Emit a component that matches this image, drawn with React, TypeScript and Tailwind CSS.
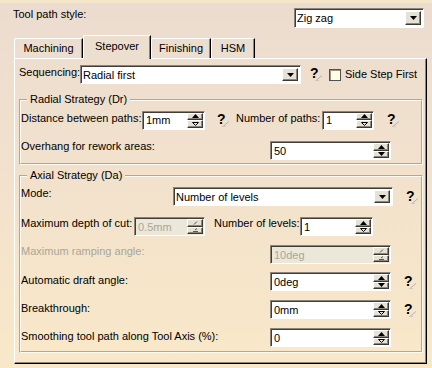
import React from 'react'

// Raised 3D bevel (classic Windows button look)
const raised =
  'border border-t-white border-l-white border-b-[#3a3833] border-r-[#3a3833] shadow-[inset_-1px_-1px_0_#8c877d] bg-[#e6e1d5]'
// Sunken field
const sunken =
  'border border-t-[#8a857c] border-l-[#8a857c] border-b-white border-r-white shadow-[inset_1px_1px_0_#3f3d39]'

function Help() {
  return (
    <span className="relative inline-block w-[14px] h-[16px] font-bold text-[14px] leading-[16px] text-black">
      ?
      <svg className="absolute left-[5px] top-[10px]" width="8" height="6" viewBox="0 0 8 6">
        <path d="M1 5.5 L7 0.5" stroke="#b8b2a6" strokeWidth="1" />
        <path d="M0 5.5 L4 5.5" stroke="#cfc9bd" strokeWidth="1" />
      </svg>
    </span>
  )
}

function Combo({ value, width, height = 19 }: { value: string; width: number; height?: number }) {
  return (
    <div className={`flex items-stretch bg-white ${sunken}`} style={{ width, height }}>
      <div className="flex-1 flex items-center pl-[2px] pt-px text-black">{value}</div>
      <div className={`w-[16px] m-[2px] ml-0 flex items-center justify-center ${raised}`}>
        <svg width="7" height="4" viewBox="0 0 7 4">
          <polygon points="0,0 7,0 3.5,4" fill="#000" />
        </svg>
      </div>
    </div>
  )
}

function SpinBtn({ up, hollow, disabled }: { up: boolean; hollow?: boolean; disabled?: boolean }) {
  return (
    <div className={`flex-1 flex items-center justify-center ${raised}`}>
      {disabled ? (
        <svg width="7" height="4" viewBox="0 0 7 4">
          {up ? (
            <path d="M2 3.5 L5 0.5" stroke="#5a574f" strokeWidth="1" />
          ) : (
            <path d="M1 3.5 L6 3.5 M3 2 L5 0.5" stroke="#5a574f" strokeWidth="1" />
          )}
        </svg>
      ) : (
        <svg width="7" height="4" viewBox="0 0 7 4">
          {up ? (
            <polygon points="0,4 7,4 3.5,0" fill="#000" />
          ) : hollow ? (
            <polygon points="0.5,0.5 6.5,0.5 3.5,3.5" fill="none" stroke="#000" strokeWidth="1" />
          ) : (
            <polygon points="0,0 7,0 3.5,4" fill="#000" />
          )}
        </svg>
      )}
    </div>
  )
}

function Spinner({
  value,
  width,
  disabled,
  hollow,
}: {
  value: string
  width: number
  disabled?: boolean
  hollow?: boolean
}) {
  return (
    <div
      className={`flex items-stretch h-[19px] ${disabled ? 'bg-[#ebe7d9]' : 'bg-white'} ${sunken}`}
      style={{ width }}
    >
      <div className={`flex-1 flex items-center pl-[3px] pt-px ${disabled ? 'text-[#aaa697]' : 'text-black'}`}>
        {value}
      </div>
      <div className="w-[16px] flex flex-col m-px ml-0 mt-[1px]">
        <SpinBtn up disabled={disabled} />
        <SpinBtn up={false} hollow={hollow} disabled={disabled} />
      </div>
    </div>
  )
}

function Tab({ label, selected, width }: { label: string; selected?: boolean; width: number }) {
  return (
    <div
      className={`flex items-center justify-center border-l border-t border-white border-r border-r-black shadow-[inset_-1px_0_0_#8c877d] rounded-tl-[2px] ${
        selected ? 'h-[24px] -mb-px z-10 pb-[2px] bg-[#eddfd0]' : 'h-[20px]'
      }`}
      style={{ width }}
    >
      {label}
    </div>
  )
}

function Group({ title, children }: { title: string; children: React.ReactNode }) {
  return (
    <fieldset className="ml-[4px] w-[404px] border-2 border-[#fffaf0] [border-style:groove]">
      <legend className="ml-[6px] px-[3px] leading-[13px]">{title}</legend>
      {children}
    </fieldset>
  )
}

export default function App() {
  return (
    <div className="relative w-[432px] h-[368px] overflow-hidden bg-linear-to-b from-[#ebdcd0] via-[#f2e2cc] to-[#f9e8c8] font-['Liberation_Sans',Arial,sans-serif] text-[11px] text-black border-t-[3px] border-t-[#f6e6c9]">
      {/* Tool path style row */}
      <div className="flex items-center h-[20px] mt-[5px]">
        <div className="pl-[13px] -mt-[8px]">Tool path style:</div>
        <div className="flex-1" />
        <div className="mr-[8px]">
          <Combo value="Zig zag" width={130} height={20} />
        </div>
      </div>

      {/* Tabs */}
      <div className="flex items-end h-[23px] mt-[7px] ml-[14px]">
        <Tab label="Machining" width={69} />
        <Tab label="Stepover" width={68} selected />
        <Tab label="Finishing" width={60} />
        <Tab label="HSM" width={44} />
      </div>

      {/* Panel */}
      <div className="ml-[14px] w-[413px] h-[306px] border-l border-t border-white border-r border-b border-r-black border-b-black shadow-[inset_-1px_-1px_0_#8c877d]">
        {/* Sequencing */}
        <div className="flex items-center h-[19px] mt-[6px] pl-[4px]">
          <div className="w-[61px] -mt-[5px]">Sequencing:</div>
          <Combo value="Radial first" width={221} />
          <div className="ml-[9px] mt-[-2px]">
            <Help />
          </div>
          <div className="ml-[5px] w-[12px] h-[12px] bg-[#fffde2] border border-[#505050] shadow-[inset_1px_1px_0_#9a958c]" />
          <div className="ml-[4px]">Side Step First</div>
        </div>

        {/* Radial strategy */}
        <div className="mt-[9px]">
          <Group title="Radial Strategy (Dr)">
            <div className="flex items-center h-[20px] mt-[4px]">
              <div className="w-[121px] -mt-[4px]">Distance between paths:</div>
              <Spinner value="1mm" width={63} hollow />
              <div className="ml-[12px]">
                <Help />
              </div>
              <div className="ml-[5px] -mt-[4px] w-[86px]">Number of paths:</div>
              <Spinner value="1" width={52} hollow />
              <div className="ml-[13px]">
                <Help />
              </div>
            </div>
            <div className="flex items-center h-[19px] mt-[11px] mb-[3px]">
              <div className="w-[249px] -mt-[8px]">Overhang for rework areas:</div>
              <Spinner value="50" width={121} />
            </div>
          </Group>
        </div>

        {/* Axial strategy */}
        <div className="mt-[4px]">
          <Group title="Axial Strategy (Da)">
            <div className="flex items-center h-[19px] mt-[5px]">
              <div className="w-[152px] -mt-[6px]">Mode:</div>
              <Combo value="Number of levels" width={220} />
              <div className="ml-[13px]">
                <Help />
              </div>
            </div>
            <div className="flex items-center h-[19px] mt-[11px]">
              <div className="w-[113px] -mt-[7px]">Maximum depth of cut:</div>
              <Spinner value="0.5mm" width={71} disabled />
              <div className="ml-[9px] w-[86px] -mt-[7px]">Number of levels:</div>
              <Spinner value="1" width={73} hollow />
            </div>
            <div className="flex items-center h-[19px] mt-[9px]">
              <div className="w-[249px] -mt-[7px] text-[#aaa697]">Maximum ramping angle:</div>
              <Spinner value="10deg" width={121} disabled />
            </div>
            <div className="flex items-center h-[19px] mt-[8px]">
              <div className="w-[249px] -mt-[3px]">Automatic draft angle:</div>
              <Spinner value="0deg" width={121} />
              <div className="ml-[13px]">
                <Help />
              </div>
            </div>
            <div className="flex items-center h-[19px] mt-[9px]">
              <div className="w-[249px] -mt-[3px]">Breakthrough:</div>
              <Spinner value="0mm" width={121} hollow />
              <div className="ml-[13px]">
                <Help />
              </div>
            </div>
            <div className="flex items-center h-[19px] mt-[9px] mb-[4px]">
              <div className="w-[249px] -mt-[3px]">Smoothing tool path along Tool Axis (%):</div>
              <Spinner value="0" width={121} hollow />
            </div>
          </Group>
        </div>
      </div>
    </div>
  )
}
